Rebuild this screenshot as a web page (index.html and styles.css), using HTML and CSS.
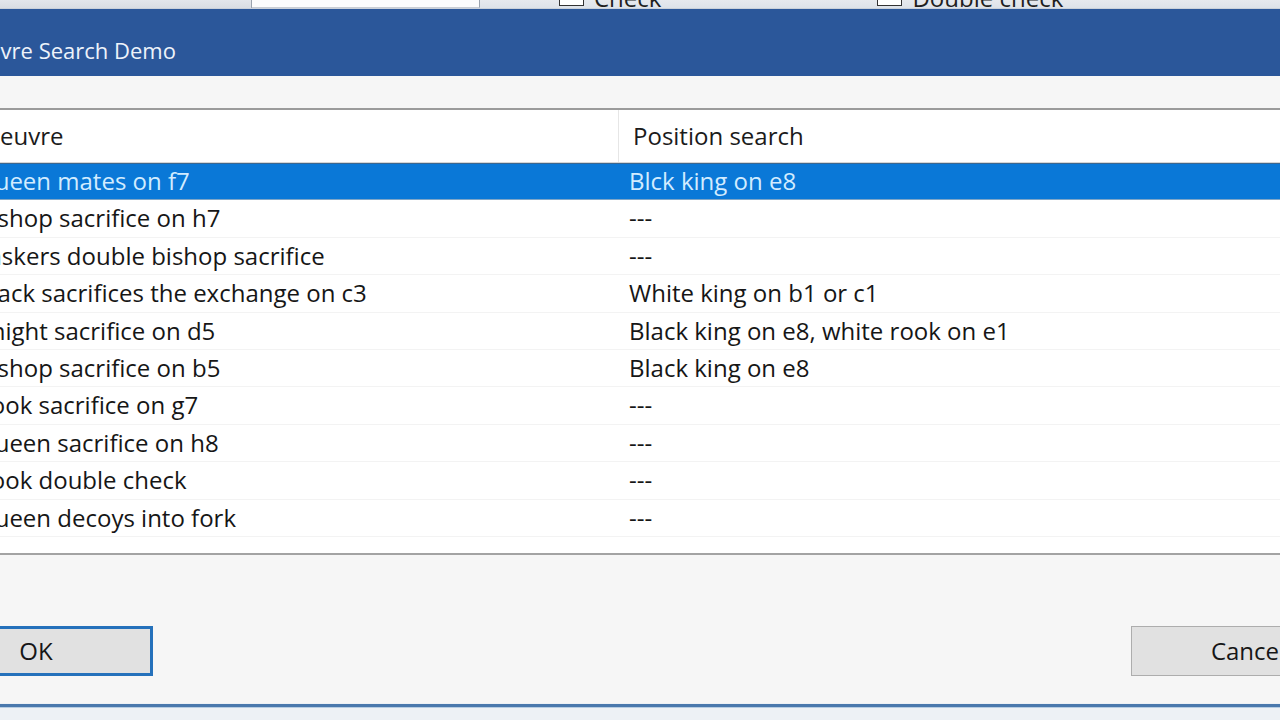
FILE: index.html
```html
<!DOCTYPE html>
<html lang="en">
<head>
<meta charset="utf-8">
<title>Manoeuvre Search Demo</title>
<link rel="stylesheet" href="styles.css">
</head>
<body>
  <div class="toolbar">
    <div class="tb-left"></div>
    <div class="tb-field"></div>
    <div class="tb-gap"></div>
    <label class="tb-check"><span class="box"></span><span class="lbl">Check</span></label>
    <label class="tb-check tb-check2"><span class="box"></span><span class="lbl">Double check</span></label>
  </div>
  <div class="window">
    <div class="titlebar">Manoeuvre Search Demo</div>
    <div class="client">
      <div class="list">
        <div class="list-head">
          <div class="hcell c1"><span class="htext first">Manoeuvre</span></div>
          <div class="hcell c2"><span class="htext">Position search</span></div>
        </div>
        <div class="rows">
          <div class="row selected"><div class="cell c1">Queen mates on f7</div><div class="cell c2">Blck king on e8</div></div>
          <div class="row"><div class="cell c1">Bishop sacrifice on h7</div><div class="cell c2">---</div></div>
          <div class="row"><div class="cell c1">Laskers double bishop sacrifice</div><div class="cell c2">---</div></div>
          <div class="row"><div class="cell c1">Black sacrifices the exchange on c3</div><div class="cell c2">White king on b1 or c1</div></div>
          <div class="row"><div class="cell c1">Knight sacrifice on d5</div><div class="cell c2">Black king on e8, white rook on e1</div></div>
          <div class="row"><div class="cell c1">Bishop sacrifice on b5</div><div class="cell c2">Black king on e8</div></div>
          <div class="row"><div class="cell c1">Rook sacrifice on g7</div><div class="cell c2">---</div></div>
          <div class="row"><div class="cell c1">Queen sacrifice on h8</div><div class="cell c2">---</div></div>
          <div class="row"><div class="cell c1">Rook double check</div><div class="cell c2">---</div></div>
          <div class="row"><div class="cell c1">Queen decoys into fork</div><div class="cell c2">---</div></div>
        </div>
      </div>
      <div class="buttons">
        <button class="btn btn-default">OK</button>
        <button class="btn">Cancel</button>
      </div>
    </div>
    <div class="frame-bottom"></div>
  </div>
</body>
</html>
```

FILE: styles.css
```css
html, body {
  margin: 0;
  padding: 0;
}
body {
  width: 1280px;
  height: 720px;
  overflow: hidden;
  background: #edf1f5;
  font-family: "Open Sans", "Noto Sans", sans-serif;
  color: #161616;
}

/* background window toolbar strip */
.toolbar {
  height: 9px;
  display: flex;
  align-items: flex-end;
  overflow: hidden;
  background: linear-gradient(#e6e9ee, #dde2e9);
  border-bottom: 1px solid #c9d0da;
  box-sizing: border-box;
}
.tb-left {
  width: 252px;
  height: 9px;
  border-right: 1px solid #9aa3ae;
  box-sizing: border-box;
  background: linear-gradient(#e4e7ec, #d9dde3);
}
.tb-field {
  width: 228px;
  height: 9px;
  background: #fbfcfd;
  border-bottom: 1px solid #c8cdd4;
  border-right: 1px solid #9aa3ae;
  box-sizing: border-box;
}
.tb-gap {
  width: 79px;
  height: 9px;
}
.tb-check {
  display: flex;
  align-items: flex-end;
  gap: 10px;
  height: 9px;
}
.tb-check .box {
  width: 25px;
  height: 24px;
  margin-bottom: 2px;
  background: #ffffff;
  border: 1px solid #333333;
  box-sizing: border-box;
  flex: none;
}
.tb-check .lbl {
  font-size: 24px;
  line-height: 24px;
  margin-bottom: -2px;
  white-space: nowrap;
  color: #1f1f1f;
}
.tb-check2 {
  margin-left: 216px;
}

.window {
  margin-left: -100px;
  width: 1500px;
}

.titlebar {
  height: 67px;
  box-sizing: border-box;
  padding: 26px 0 0 16px;
  background: #2b579a;
  color: #eef3fa;
  font-size: 22px;
  line-height: 30px;
  white-space: nowrap;
}

.client {
  background: #f6f6f6;
  padding-top: 32px;
}

.list {
  margin-left: 70px;
  background: #ffffff;
  border-top: 2px solid #9b9b9b;
  border-bottom: 2px solid #a3a3a3;
  padding-bottom: 16px;
}
.list-head {
  display: flex;
  height: 53px;
  box-sizing: border-box;
  border-bottom: 1px solid #d6d6d6;
}
.hcell {
  box-sizing: border-box;
  font-size: 24px;
  line-height: 47px;
  padding-top: 2px;
  padding-left: 14px;
  white-space: nowrap;
  overflow: hidden;
  color: #1b1b1b;
}
.hcell.c1 {
  border-right: 1px solid #e6e6e6;
}
.htext.first {
  margin-left: -48px;
}
.c1 {
  width: 649px;
  flex: none;
}
.c2 {
  flex: 1;
}

.row {
  display: flex;
  height: 37.4px;
  box-sizing: border-box;
  border-bottom: 1px solid #f3f3f3;
}
.cell {
  font-size: 24px;
  line-height: 30px;
  padding-top: 3px;
  padding-left: 10px;
  white-space: nowrap;
  box-sizing: border-box;
}
.cell.c1 {
  padding-left: 6px;
}
.row.selected {
  background: #0a78d7;
  border-top: 1px solid #3b6791;
  border-bottom: 1px solid #7fa6c7;
  color: #d2ecff;
}
.row.selected .cell {
  padding-top: 2px;
}

.buttons {
  display: flex;
  justify-content: space-between;
  padding: 71px 35px 27px 19px;
}
.btn {
  width: 234px;
  height: 50px;
  box-sizing: border-box;
  background: #e1e1e1;
  border: 1px solid #adadad;
  font-family: "Open Sans", "Noto Sans", sans-serif;
  font-size: 24px;
  color: #161616;
  padding: 0;
  line-height: 44px;
}
.btn-default {
  border: 3px solid #2571bb;
}

.frame-bottom {
  height: 3px;
  margin-top: 1px;
  background: #4a79ad;
  border-bottom: 1px solid #b7cde2;
}
```
